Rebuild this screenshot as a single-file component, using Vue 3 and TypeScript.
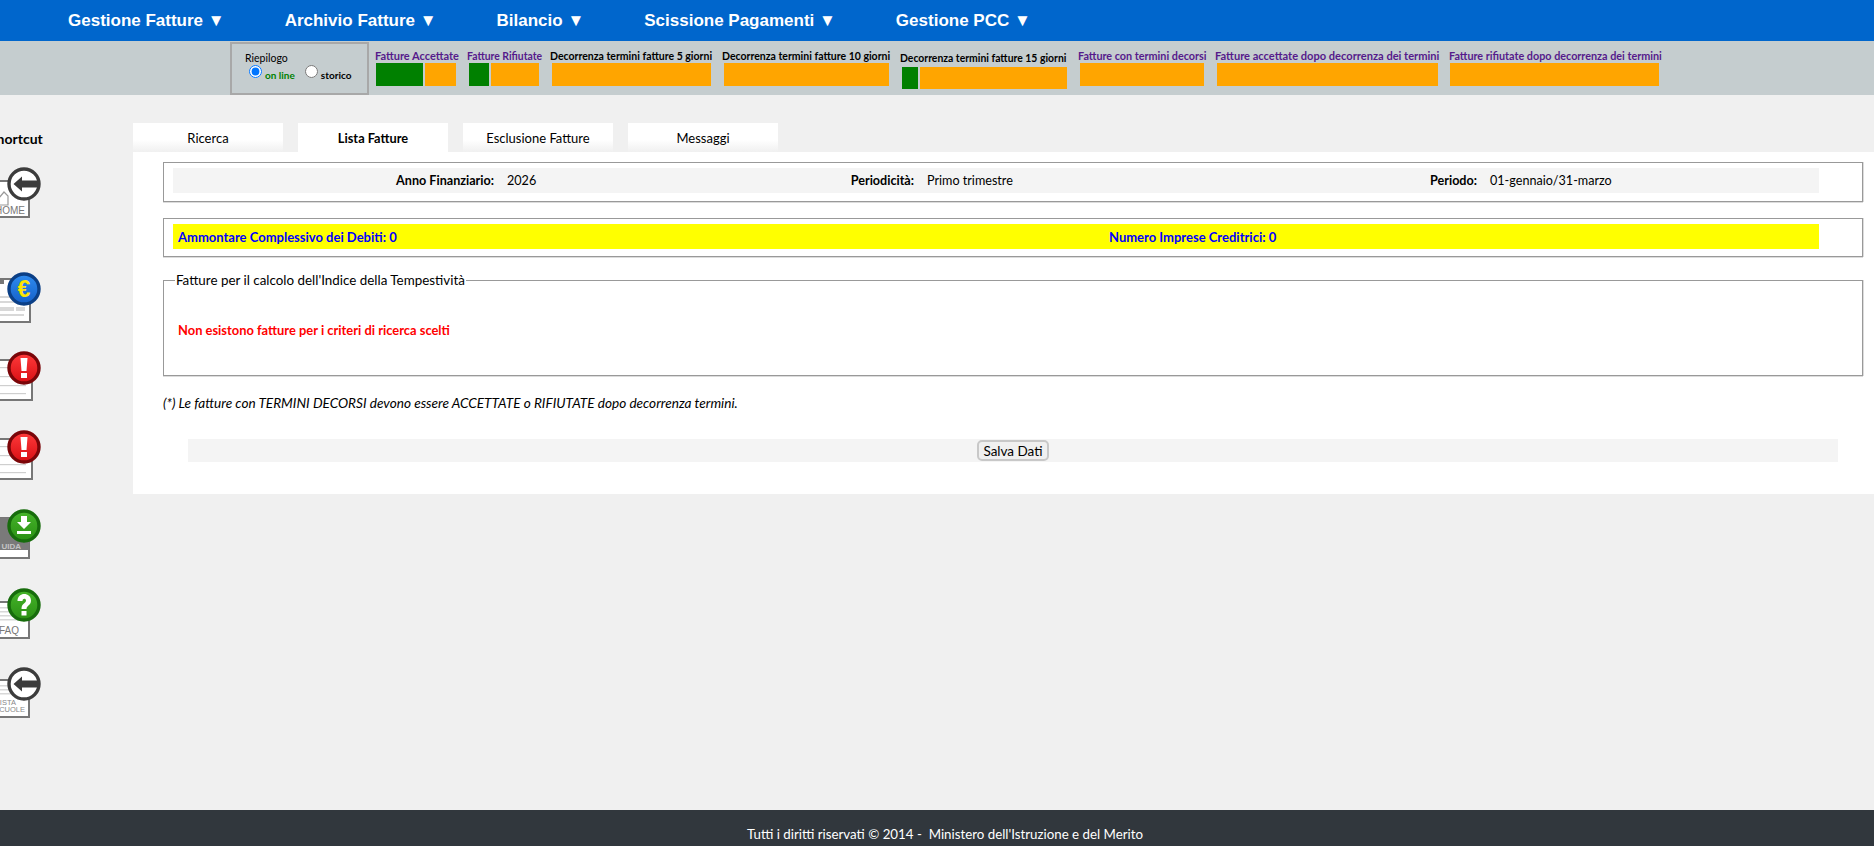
<script setup lang="ts">
interface Stat {
  label: string;
  width: number;
  purple?: boolean;
  low?: boolean;
  size?: number;
  ok: number;
  todo: number;
  pad: number;
}

const menu = ['Gestione Fatture', 'Archivio Fatture', 'Bilancio', 'Scissione Pagamenti', 'Gestione PCC'];
const tabs = ['Ricerca', 'Lista Fatture', 'Esclusione Fatture', 'Messaggi'];

const stats: Stat[] = [
  { label: 'Fatture Accettate', width: 92, purple: true, size: 11, ok: 47, todo: 31, pad: 1 },
  { label: 'Fatture Rifiutate', width: 83, purple: true, size: 10.4, ok: 20, todo: 48, pad: 2 },
  { label: 'Decorrenza termini fatture 5 giorni', width: 172, size: 10.5, ok: 0, todo: 159, pad: 2 },
  { label: 'Decorrenza termini fatture 10 giorni', width: 178, size: 10.5, ok: 0, todo: 165, pad: 2 },
  { label: 'Decorrenza termini fatture 15 giorni', width: 178, size: 10.4, low: true, ok: 16, todo: 147, pad: 2 },
  { label: 'Fatture con termini decorsi', width: 137, purple: true, size: 10.8, ok: 0, todo: 124, pad: 2 },
  { label: 'Fatture accettate dopo decorrenza dei termini', width: 234, purple: true, size: 11.1, ok: 0, todo: 221, pad: 2 },
  { label: 'Fatture rifiutate dopo decorrenza dei termini', width: 211, purple: true, size: 10.8, ok: 0, todo: 209, pad: 1 },
];

type Badge = 'back' | 'euro' | 'alert' | 'down' | 'help';
interface Shortcut {
  id: string;
  badge: Badge;
  docTop: number;
  docBottom: number;
  docRight: number;
}

const shortcuts: Shortcut[] = [
  { id: 'home', badge: 'back', docTop: 17, docBottom: 53, docRight: 29 },
  { id: 'fatture', badge: 'euro', docTop: 10, docBottom: 53, docRight: 30 },
  { id: 'acc', badge: 'alert', docTop: 12, docBottom: 52, docRight: 32 },
  { id: 'rif', badge: 'alert', docTop: 12, docBottom: 52, docRight: 32 },
  { id: 'guida', badge: 'down', docTop: 12, docBottom: 52, docRight: 29 },
  { id: 'faq', badge: 'help', docTop: 17, docBottom: 53, docRight: 29 },
  { id: 'lista', badge: 'back', docTop: 16, docBottom: 53, docRight: 29 },
];

const badgeColors: Record<Badge, [string, string, string]> = {
  back: ['#ffffff', '#ffffff', '#3c3c3c'],
  euro: ['#2f8cf0', '#1560c8', '#0b3f86'],
  alert: ['#ff3b3b', '#d80f14', '#7a0508'],
  down: ['#46b52a', '#2a8f14', '#176c0c'],
  help: ['#46b52a', '#2a8f14', '#176c0c'],
};
</script>

<template>
  <div class="page">
    <nav class="topbar">
      <a v-for="item in menu" :key="item" class="topbar-item">{{ item }} ▼</a>
    </nav>

    <section class="strip">
      <div class="summary">
        <div class="summary-title">Riepilogo</div>
        <div class="summary-options">
          <label class="opt opt-online"><input type="radio" name="mode" checked /><span>on line</span></label>
          <label class="opt"><input type="radio" name="mode" /><span>storico</span></label>
        </div>
      </div>
      <div
        v-for="stat in stats"
        :key="stat.label"
        class="stat"
        :class="{ 'stat-low': stat.low }"
        :style="{ width: stat.width + 'px' }"
      >
        <div class="stat-label" :class="{ purple: stat.purple }" :style="{ fontSize: stat.size + 'px' }">{{ stat.label }}</div>
        <div class="stat-bar" :style="{ paddingLeft: stat.pad + 'px' }">
          <span v-if="stat.ok" class="seg seg-ok" :style="{ width: stat.ok + 'px' }"></span>
          <span class="seg seg-todo" :style="{ width: stat.todo + 'px' }"></span>
        </div>
      </div>
    </section>

    <div class="body-row">
      <aside class="side">
        <div class="side-title">Shortcut</div>
        <a v-for="s in shortcuts" :key="s.id" class="shortcut">
          <svg width="46" height="60" viewBox="0 0 46 60">
            <defs>
              <linearGradient :id="'g-' + s.id" x1="0" y1="0" x2="0" y2="1">
                <stop offset="0" :stop-color="badgeColors[s.badge][0]" />
                <stop offset="1" :stop-color="badgeColors[s.badge][1]" />
              </linearGradient>
            </defs>
            <!-- document behind the badge -->
            <rect x="-20" :y="s.docTop" :width="s.docRight + 20" :height="s.docBottom - s.docTop" fill="#fff" stroke="#777" stroke-width="2" />

            <template v-if="s.id === 'home'">
              <path d="M-1 34 L4 28 L8 32 V41 H-1 Z" fill="#fff" stroke="#999" stroke-width="1.2" />
              <text class="cap" x="25" y="50">HOME</text>
            </template>
            <g v-if="s.id === 'fatture'" fill="#d8d8d8">
              <rect x="-20" y="10" width="24" height="5" fill="#777" />
              <rect x="0" y="27" width="24" height="2" />
              <rect x="0" y="32" width="24" height="2" />
              <rect x="0" y="38" width="14" height="4" />
              <rect x="16" y="38" width="9" height="4" />
              <rect x="0" y="45" width="24" height="2" />
            </g>
            <g v-if="s.badge === 'alert'" fill="#cfcfcf">
              <rect x="0" :y="s.docTop + 7" width="26" height="1.2" />
              <rect x="0" :y="s.docTop + 16" width="26" height="1.2" />
              <rect x="0" :y="s.docTop + 25" width="26" height="1.2" />
              <rect x="0" :y="s.docTop + 33" width="26" height="1.2" />
            </g>
            <template v-if="s.id === 'guida'">
              <rect x="-20" y="12" width="49" height="32" fill="#7a7a7a" />
              <text class="cap cap-light" x="21" y="43">UIDA</text>
            </template>
            <template v-if="s.id === 'faq'">
              <g fill="#d8d8d8">
                <rect x="0" y="22" width="24" height="1.5" />
                <rect x="0" y="26" width="24" height="1.5" />
                <rect x="0" y="30" width="24" height="1.5" />
                <rect x="0" y="34" width="24" height="1.5" />
              </g>
              <text class="cap" x="19" y="49">FAQ</text>
            </template>
            <template v-if="s.id === 'lista'">
              <g fill="#d8d8d8">
                <rect x="0" y="21" width="24" height="1.5" />
                <rect x="0" y="25" width="24" height="1.5" />
                <rect x="0" y="29" width="24" height="1.5" />
              </g>
              <text class="cap cap-small" x="16" y="41">LISTA</text>
              <text class="cap cap-small" x="25" y="48">SCUOLE</text>
            </template>

            <!-- round badge -->
            <circle cx="24" cy="20" r="15" :fill="'url(#g-' + s.id + ')'" :stroke="badgeColors[s.badge][2]" stroke-width="3.4" />
            <path v-if="s.badge === 'back'" d="M13.5 20 L22 12.5 V16.5 H38 V23.5 H22 V27.5 Z" fill="#3c3c3c" />
            <path v-if="s.badge === 'alert'" d="M20.5 10 H27.5 L26.5 23 H21.5 Z M21 25 H27 V30 H21 Z" fill="#fff" />
            <path v-if="s.badge === 'down'" d="M21 10 H27 V16 H31 L24 23 L17 16 H21 Z M17 25 H31 V28 H17 Z" fill="#fff" />
            <path v-if="s.badge === 'help'" d="M17.5 16 C17.5 6.5 31 7 31 15.5 C31 20.5 26.5 20.5 26.5 24 H21.5 C21.5 18 26 18.5 26 15.5 C26 13 22.5 13 22.5 16 Z M21.5 26 H26.5 V30.5 H21.5 Z" fill="#fff" />
            <text v-if="s.badge === 'euro'" class="euro" x="24" y="28">€</text>
          </svg>
        </a>
      </aside>

      <main class="content">
        <div class="tabs">
          <button
            v-for="(tab, i) in tabs"
            :key="tab"
            type="button"
            class="tab"
            :class="{ active: i === 1 }"
          >{{ tab }}</button>
        </div>

        <div class="panel">
          <div class="box">
            <div class="info-row">
              <strong>Anno Finanziario:</strong><span>2026</span>
              <strong>Periodicità:</strong><span>Primo trimestre</span>
              <strong>Periodo:</strong><span>01-gennaio/31-marzo</span>
            </div>
          </div>

          <div class="box box-second">
            <div class="totals-row">
              <span>Ammontare Complessivo dei Debiti: 0</span>
              <span>Numero Imprese Creditrici: 0</span>
            </div>
          </div>

          <fieldset class="group">
            <legend>Fatture per il calcolo dell'Indice della Tempestività</legend>
            <p class="empty">Non esistono fatture per i criteri di ricerca scelti</p>
          </fieldset>

          <p class="note">(*) Le fatture con TERMINI DECORSI devono essere ACCETTATE o RIFIUTATE dopo decorrenza termini.</p>

          <div class="actions">
            <button type="button" class="save">Salva Dati</button>
          </div>
        </div>
      </main>
    </div>

    <footer class="footer">Tutti i diritti riservati © 2014 -&nbsp; Ministero dell'Istruzione e del Merito</footer>
  </div>
</template>

<style scoped>
.page {
  display: flex;
  flex-direction: column;
  height: 846px;
  overflow: hidden;
  background: #f0f0f0;
  font-family: "Lato", "Liberation Sans", sans-serif;
  color: #000;
}

.topbar {
  display: flex;
  height: 41px;
  padding-left: 38px;
  align-items: center;
  background: #0066cc;
  flex-shrink: 0;
}
.topbar-item {
  padding: 0 30px;
  color: #fff;
  font-family: "Liberation Sans", sans-serif;
  font-size: 17px;
  font-weight: 700;
}

.strip {
  display: flex;
  height: 54px;
  padding-left: 230px;
  background: #c5cdcf;
  flex-shrink: 0;
  align-items: flex-start;
}
.summary {
  width: 139px;
  height: 53px;
  margin-top: 1px;
  margin-right: 6px;
  box-sizing: border-box;
  padding: 8px 0 0 13px;
  border: 2px solid #a8a8a8;
  font-size: 10.5px;
  flex-shrink: 0;
}
.summary-title {
  line-height: 12px;
}
.summary-options {
  display: flex;
  gap: 10px;
  margin-left: 4px;
  margin-top: 1px;
}
.opt {
  display: flex;
  align-items: flex-end;
  font-weight: 700;
  font-size: 10px;
}
.opt input {
  width: 13px;
  height: 13px;
  margin: 0 3px 3px 0;
}
.opt-online {
  color: #008000;
}
.stat {
  flex-shrink: 0;
  padding-top: 9px;
  white-space: nowrap;
}
.stat-label {
  font-weight: 700;
  line-height: 12px;
}
.purple {
  color: #551a8b;
}
.stat-bar {
  display: flex;
  gap: 2px;
  margin-top: 1px;
}
.seg {
  display: block;
  height: 23px;
}
.seg-ok {
  background: #008000;
}
.seg-todo {
  background: #ffa500;
}
.stat-low {
  padding-top: 11px;
}
.stat-low .stat-bar {
  margin-top: 3px;
}
.stat-low .seg {
  height: 22px;
}

.body-row {
  display: flex;
  flex: 1;
  min-height: 0;
}
.side {
  width: 133px;
  flex-shrink: 0;
  overflow: hidden;
}
.side-title {
  margin: 36px 0 0 -11px;
  font-size: 14px;
  font-weight: 700;
  line-height: 16px;
  white-space: nowrap;
}
.shortcut {
  display: block;
  height: 60px;
  margin-bottom: 19px;
}
.shortcut:first-of-type {
  margin-top: 17px;
  margin-bottom: 45px;
}
.shortcut svg {
  display: block;
}
.cap {
  font-family: "Liberation Sans", sans-serif;
  font-size: 10px;
  fill: #777;
  text-anchor: end;
}
.cap-light {
  fill: #c4c4c4;
  font-weight: 700;
  font-size: 8px;
}
.cap-small {
  font-size: 7.5px;
  fill: #888;
}
.euro {
  font-family: "Liberation Sans", sans-serif;
  font-size: 23px;
  font-weight: 700;
  fill: #ffe500;
  text-anchor: middle;
}

.content {
  flex: 1;
  min-width: 0;
  padding-top: 28px;
}
.tabs {
  display: flex;
  gap: 15px;
  height: 29px;
}
.tab {
  width: 150px;
  height: 29px;
  padding: 0;
  border: 0;
  background: linear-gradient(#fff 58%, #f0f0f0);
  font: 13px "Lato", "Liberation Sans", sans-serif;
  color: #000;
}
.tab.active {
  background: #fff;
  font-weight: 700;
  font-size: 12.8px;
}

.panel {
  height: 342px;
  box-sizing: border-box;
  padding: 10px 11px 0 30px;
  background: #fff;
  font-size: 12.6px;
}
.box {
  height: 40px;
  box-sizing: border-box;
  padding: 5px 0 0 9px;
  border: 1px solid #999;
  box-shadow: 0 1px 0 #dcdcdc, 1px 0 0 #dcdcdc;
}
.box-second {
  height: 39px;
  margin-top: 16px;
}
.info-row,
.totals-row {
  display: grid;
  align-items: center;
  width: 1646px;
  height: 25px;
}
.info-row {
  grid-template-columns: 321px 100px 320px 243px 320px 342px;
  background: #f4f4f4;
}
.info-row strong {
  text-align: right;
}
.info-row span {
  padding-left: 13px;
}
.totals-row {
  grid-template-columns: 931px 1fr;
  background: #ff0;
  color: #0000ff;
  font-size: 13px;
  font-weight: 700;
}
.totals-row span {
  padding-left: 5px;
}
.group {
  height: 104px;
  box-sizing: border-box;
  margin: 15px 0 0;
  padding: 0 0 0 14px;
  border: 1px solid #999;
  box-shadow: 0 1px 0 #dcdcdc, 1px 0 0 #dcdcdc;
}
.group legend {
  margin-left: -3px;
  padding: 0 1px;
  font-size: 13.4px;
  line-height: 16px;
}
.empty {
  margin: 35px 0 0;
  font-size: 12.9px;
  font-weight: 700;
  color: #f00;
  line-height: 14px;
}
.note {
  margin: 20px 0 0;
  font-size: 13.6px;
  font-style: italic;
  line-height: 14px;
}
.actions {
  display: flex;
  justify-content: center;
  align-items: center;
  width: 1650px;
  height: 23px;
  margin: 29px 0 0 25px;
  background: #f4f4f4;
}
.save {
  width: 72px;
  height: 21px;
  padding: 0;
  border: 2px solid #c8c8c8;
  border-radius: 5px;
  background: #f0f0f0;
  font: 13.5px "Lato", "Liberation Sans", sans-serif;
  color: #000;
}

.footer {
  height: 36px;
  flex-shrink: 0;
  box-sizing: border-box;
  padding: 16px 0 0 16px;
  background: #31373d;
  color: #fff;
  font-size: 13.3px;
  line-height: 16px;
  text-align: center;
}
</style>
